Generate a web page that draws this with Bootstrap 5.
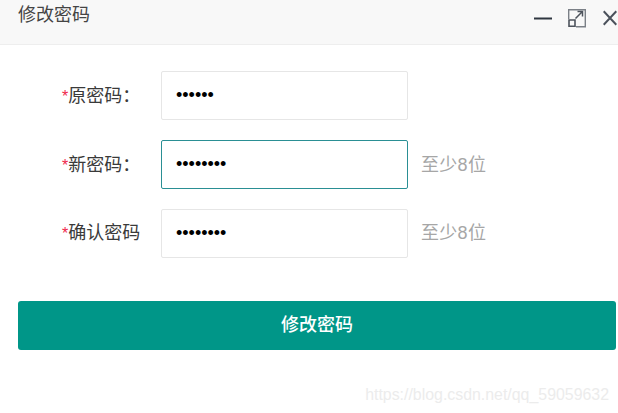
<!DOCTYPE html>
<html lang="zh-CN">
<head>
    <meta charset="utf-8">
    <meta name="viewport" content="width=device-width, initial-scale=1">
    <title>修改密码</title>
    <link href="https://cdn.jsdelivr.net/npm/bootstrap@5.3.3/dist/css/bootstrap.min.css" rel="stylesheet">
    <style>
        html, body {
            height: 413px;
            overflow: hidden;
        }
        body {
            font-family: "Liberation Sans", "Noto Sans CJK SC", sans-serif;
            font-size: 18px;
            color: #333;
            background: #fff;
        }
        .dlg-head {
            height: 45px;
            background: #f8f8f8;
            border-bottom: 1px solid #eee;
            padding-left: 18px;
            color: #444;
            line-height: 31px;
        }
        .dlg-tools {
            margin-left: auto;
            gap: 16px;
            padding-top: 8px;
            padding-right: 1px;
        }
        .dlg-tools svg {
            display: block;
        }
        .dlg-tools .dlg-close {
            margin-left: 1px;
        }
        .pwd-form {
            padding-top: 26px;
        }
        .pwd-row {
            height: 49px;
            margin-bottom: 20px;
        }
        .pwd-label {
            width: 161px;
            padding-left: 62px;
            padding-top: 2px;
            color: #3a3a3a;
            white-space: nowrap;
        }
        .pwd-star {
            color: #f0284a;
            font-size: 16px;
        }
        .pwd-input.form-control {
            width: 247px;
            height: 49px;
            border: 1px solid #e6e6e6;
            border-radius: 2px;
            padding: 0 14px;
            font-family: "Liberation Sans", sans-serif;
            font-size: 18px;
            color: #000;
            box-shadow: none;
        }
        .pwd-input.is-current {
            border-color: #2a8f94;
        }
        .pwd-hint {
            margin-left: 13px;
            padding-top: 2px;
            color: #a6a6a6;
            letter-spacing: 0.3px;
        }
        .pwd-row-last .pwd-label,
        .pwd-row-last .pwd-hint {
            padding-top: 0;
        }
        .pwd-submit.btn {
            display: block;
            width: 598px;
            height: 49px;
            margin: 43px 0 0 18px;
            padding: 0;
            border: 0;
            border-radius: 3px;
            background: #009688;
            color: #fff;
            font-size: 18px;
            font-weight: 500;
        }
        .csdn-mark {
            position: absolute;
            right: 9px;
            top: 384px;
            font-size: 15.9px;
            color: #ececec;
            line-height: 22px;
        }
    </style>
</head>
<body>
    <div class="dlg-head d-flex">
        <span>修改密码</span>
        <div class="dlg-tools d-flex">
            <svg width="18" height="20" viewBox="0 0 18 20"><path d="M0 10.500h18" stroke="#2f3640" stroke-width="2" fill="none"/></svg>
            <svg width="18" height="20" viewBox="0 0 18 20" fill="none">
                <path d="M.7 11V1.700h16.600v17H8" stroke="#7b8087" stroke-width="1.400"/>
                <path d="M9.500 3.500h5v5M14.200 3.800 7.500 10.500" stroke="#4d535c" stroke-width="1.500"/>
                <path d="M1 12h6v6.200H1z" stroke="#4d535c" stroke-width="1.600"/>
            </svg>
            <svg class="dlg-close" width="14" height="20" viewBox="0 0 14 20" fill="none" stroke="#4a515b" stroke-width="2"><path d="M.7 3.300l12.600 13.400M13.300 3.300.7 16.700"/></svg>
        </div>
    </div>
    <form class="pwd-form">
        <div class="pwd-row d-flex align-items-center">
            <label class="pwd-label"><span class="pwd-star">*</span>原密码：</label>
            <input class="pwd-input form-control" type="password" value="123456">
        </div>
        <div class="pwd-row d-flex align-items-center">
            <label class="pwd-label"><span class="pwd-star">*</span>新密码：</label>
            <input class="pwd-input is-current form-control" type="password" value="12345678">
            <span class="pwd-hint">至少8位</span>
        </div>
        <div class="pwd-row pwd-row-last d-flex align-items-center">
            <label class="pwd-label"><span class="pwd-star">*</span>确认密码</label>
            <input class="pwd-input form-control" type="password" value="12345678">
            <span class="pwd-hint">至少8位</span>
        </div>
        <button type="button" class="pwd-submit btn">修改密码</button>
    </form>
    <div class="csdn-mark">https://blog.csdn.net/qq_59059632</div>
    <script src="https://cdn.jsdelivr.net/npm/bootstrap@5.3.3/dist/js/bootstrap.bundle.min.js"></script>
</body>
</html>
